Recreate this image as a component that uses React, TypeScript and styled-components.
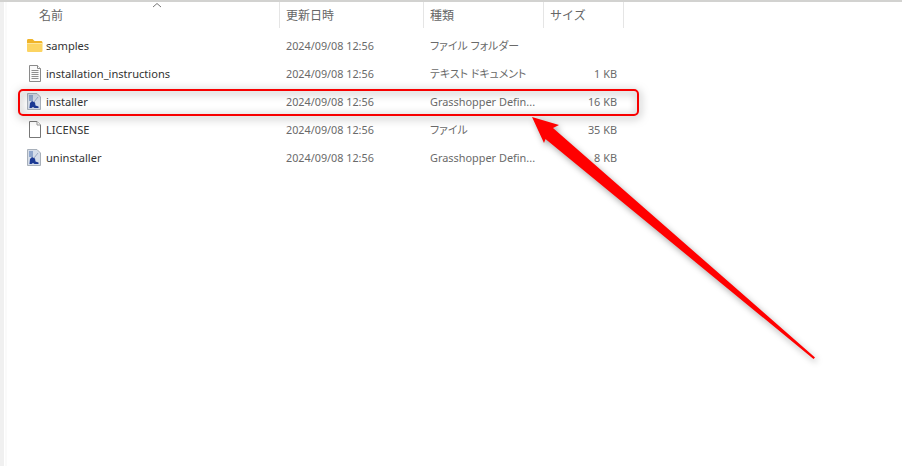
import styled, { createGlobalStyle } from "styled-components";

const GlobalStyle = createGlobalStyle`
  html, body {
    margin: 0;
    padding: 0;
    background: #fff;
  }
`;

const Page = styled.div`
  position: relative;
  display: flex;
  width: 902px;
  height: 466px;
  overflow: hidden;
  background: #fff;
  border-top: 2px solid #d2d2d0;
  box-sizing: border-box;
  font-family: "Noto Sans", "Noto Sans CJK JP", sans-serif;
  font-size: 11.1px;
  font-feature-settings: "palt";
`;
const Sidebar = styled.div`
  width: 4px;
  background: #f0f0f0;
  flex: none;
`;
const Gutter = styled.div`
  width: 2px;
  margin-left: 1px;
  background: #fafafa;
  flex: none;
`;
const Pane = styled.div`
  flex: 1;
`;
const Columns = styled.div`
  display: grid;
  grid-template-columns: 273px 144px 120px 80px;
`;
const HeaderRow = styled(Columns)`
  height: 26px;
  position: relative;
`;
const HeaderCell = styled.div<{ $indent: number }>`
  display: flex;
  align-items: center;
  padding-left: ${(p) => p.$indent}px;
  border-right: 1px solid #e5e5e5;
  color: #666;
  font-family: "Noto Sans CJK JP", sans-serif;
  font-size: 12px;
  font-feature-settings: normal;
  padding-bottom: 2px;
`;
const SortCaret = styled.svg`
  position: absolute;
  left: 145px;
  top: 0;
`;
const Rows = styled.div`
  padding-top: 3px;
`;
const Row = styled(Columns)`
  height: 28px;
  align-items: center;
  color: #6a6a6a;
`;
const NameCell = styled.div`
  display: flex;
  align-items: center;
  color: #333;
  padding-left: 19px;
`;
const IconBox = styled.div`
  width: 20px;
  height: 18px;
  display: flex;
  align-items: center;
  flex: none;
`;
const DateCell = styled.div`
  padding-left: 6px;
  font-size: 10.8px;
`;
const TypeCell = styled.div`
  padding-left: 6px;
  font-size: 10.9px;
  white-space: nowrap;
`;
const SizeCell = styled.div`
  text-align: right;
  padding-right: 7px;
  font-size: 10.9px;
`;
const Highlight = styled.div`
  position: absolute;
  left: 18px;
  top: 87px;
  width: 621px;
  height: 27px;
  box-sizing: border-box;
  border: 2px solid #f80000;
  border-radius: 5px;
  filter: drop-shadow(1px 2px 4px rgba(0, 0, 0, 0.5));
`;
const Arrow = styled.svg`
  position: absolute;
  left: 0;
  top: -2px;
  filter: drop-shadow(2px 3px 3px rgba(0, 0, 0, 0.35));
`;

function FolderIcon() {
  return (
    <svg width="17" height="15" viewBox="0 0 17 15">
      <path d="M1 2.500C1 1.700 1.500 1 2.300 1H6.500L8.500 3H15C15.800 3 16.500 3.600 16.500 4.500V5H1Z" fill="#f0b429" />
      <path d="M1 5H16.500V12.700C16.500 13.500 15.800 14 15 14H2.400C1.600 14 1 13.500 1 12.700Z" fill="#fcd462" />
      <path d="M1 5H16.500V6H1Z" fill="#fde59a" />
    </svg>
  );
}

function TextIcon() {
  return (
    <svg width="14" height="17" viewBox="0 0 14 17" style={{ marginLeft: 2 }}>
      <path d="M1.500 .5H9.500L12.500 3.500V16.500H1.500Z" fill="#fafafa" stroke="#8a8a8a" />
      <path d="M9.500 .5V3.500H12.500" fill="#fff" stroke="#8a8a8a" />
      <path d="M3.500 5.500H10.500M3.500 7.500H10.500M3.500 9.500H10.500M3.500 11.500H10.500M3.500 13.500H10.500" stroke="#8f8f8f" />
    </svg>
  );
}

function BlankIcon() {
  return (
    <svg width="14" height="17" viewBox="0 0 14 17" style={{ marginLeft: 2 }}>
      <path d="M1.500 .5H9L12.500 4V16.500H1.500Z" fill="#fff" stroke="#777" />
      <path d="M9 .5V4H12.500" fill="#fff" stroke="#999" />
    </svg>
  );
}

function GrasshopperIcon() {
  return (
    <svg width="14" height="17" viewBox="0 0 14 17" style={{ marginLeft: 1 }}>
      <path d="M.5 .5H10L13.500 4V16.500H.5Z" fill="#d5dde9" stroke="#a8b0ba" />
      <path d="M2 2H6V8H2Z" fill="#8fa6cc" />
      <path d="M2.500 15L3 10L5 8L8 9.500L8.500 12.500L11.500 13.500V15H7.500L6 14L4.500 15Z" fill="#1c3a94" />
      <path d="M7 9L11 4" stroke="#9aa9c2" strokeWidth="1" fill="none" />
    </svg>
  );
}

interface FileEntry {
  name: string;
  type: string;
  size: string;
  icon: React.ReactNode;
}

const files: FileEntry[] = [
  { name: "samples", type: "ファイル フォルダー", size: "", icon: <FolderIcon /> },
  { name: "installation_instructions", type: "テキスト ドキュメント", size: "1 KB", icon: <TextIcon /> },
  { name: "installer", type: "Grasshopper Defin...", size: "16 KB", icon: <GrasshopperIcon /> },
  { name: "LICENSE", type: "ファイル", size: "35 KB", icon: <BlankIcon /> },
  { name: "uninstaller", type: "Grasshopper Defin...", size: "8 KB", icon: <GrasshopperIcon /> },
];

export default function App() {
  return (
    <>
      <GlobalStyle />
      <Page>
        <Sidebar />
        <Gutter />
        <Pane>
          <HeaderRow>
            <HeaderCell $indent={32}>名前</HeaderCell>
            <HeaderCell $indent={6}>更新日時</HeaderCell>
            <HeaderCell $indent={6}>種類</HeaderCell>
            <HeaderCell $indent={6}>サイズ</HeaderCell>
            <SortCaret width="10" height="6" viewBox="0 0 10 6">
              <path d="M1 5L5 1.500L9 5" fill="none" stroke="#777" />
            </SortCaret>
          </HeaderRow>
          <Rows>
            {files.map((file) => (
              <Row key={file.name}>
                <NameCell>
                  <IconBox>{file.icon}</IconBox>
                  {file.name}
                </NameCell>
                <DateCell>2024/09/08 12:56</DateCell>
                <TypeCell>{file.type}</TypeCell>
                <SizeCell>{file.size}</SizeCell>
              </Row>
            ))}
          </Rows>
        </Pane>
        <Highlight />
        <Arrow width="902" height="466" viewBox="0 0 902 466">
          <path d="M532 117L559 125L553 128L815 357.500L813.500 359L545.500 139L544 143Z" fill="#ff0000" />
        </Arrow>
      </Page>
    </>
  );
}
